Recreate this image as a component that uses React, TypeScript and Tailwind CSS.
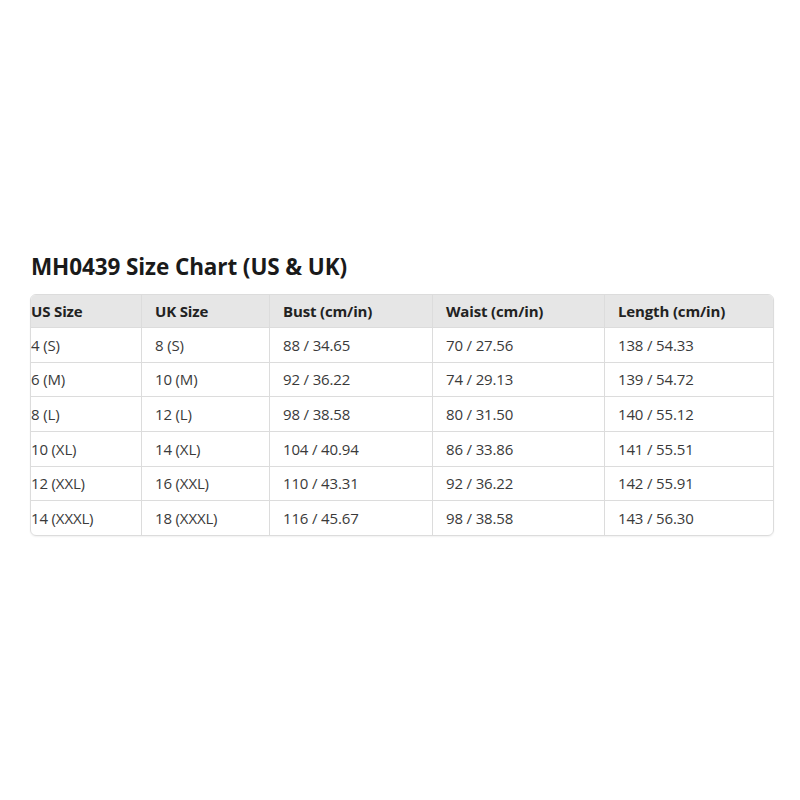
const headers = ["US Size", "UK Size", "Bust (cm/in)", "Waist (cm/in)", "Length (cm/in)"];

const rows = [
  ["4 (S)", "8 (S)", "88 / 34.65", "70 / 27.56", "138 / 54.33"],
  ["6 (M)", "10 (M)", "92 / 36.22", "74 / 29.13", "139 / 54.72"],
  ["8 (L)", "12 (L)", "98 / 38.58", "80 / 31.50", "140 / 55.12"],
  ["10 (XL)", "14 (XL)", "104 / 40.94", "86 / 33.86", "141 / 55.51"],
  ["12 (XXL)", "16 (XXL)", "110 / 43.31", "92 / 36.22", "142 / 55.91"],
  ["14 (XXXL)", "18 (XXXL)", "116 / 45.67", "98 / 38.58", "143 / 56.30"],
];

const cols = "grid grid-cols-[110px_128px_163px_172px_169px]";

function Cell({ i, children, head }: { i: number; children: string; head?: boolean }) {
  return (
    <div
      className={`flex items-center ${i === 0 ? "pl-0" : "pl-[13px] border-l border-[#dcdcdc]"} ${
        head ? "font-bold text-[#222]" : "text-[#3a3a3a]"
      }`}
    >
      {children}
    </div>
  );
}

export default function App() {
  return (
    <div className="w-[800px] h-[800px] bg-white pt-[251px] pl-[30px] font-['Open_Sans',sans-serif]">
      <h1 className="text-[22.5px] font-bold text-[#1a1a1a] leading-[32px] pl-px tracking-[-0.1px]">
        MH0439 Size Chart (US &amp; UK)
      </h1>
      <div className="mt-[11px] w-[744px] border border-[#dcdcdc] rounded-[6px] overflow-hidden text-[15px] tracking-[-0.15px] shadow-[0_1px_2px_rgba(0,0,0,0.06)]">
        <div className={`${cols} h-[32px] bg-[#e6e6e6]`}>
          {headers.map((h, i) => (
            <Cell key={h} i={i} head>
              {h}
            </Cell>
          ))}
        </div>
        {rows.map((r, ri) => (
          <div key={ri} className={`${cols} h-[34.7px] border-t border-[#dcdcdc]`}>
            {r.map((c, i) => (
              <Cell key={i} i={i}>
                {c}
              </Cell>
            ))}
          </div>
        ))}
      </div>
    </div>
  );
}
